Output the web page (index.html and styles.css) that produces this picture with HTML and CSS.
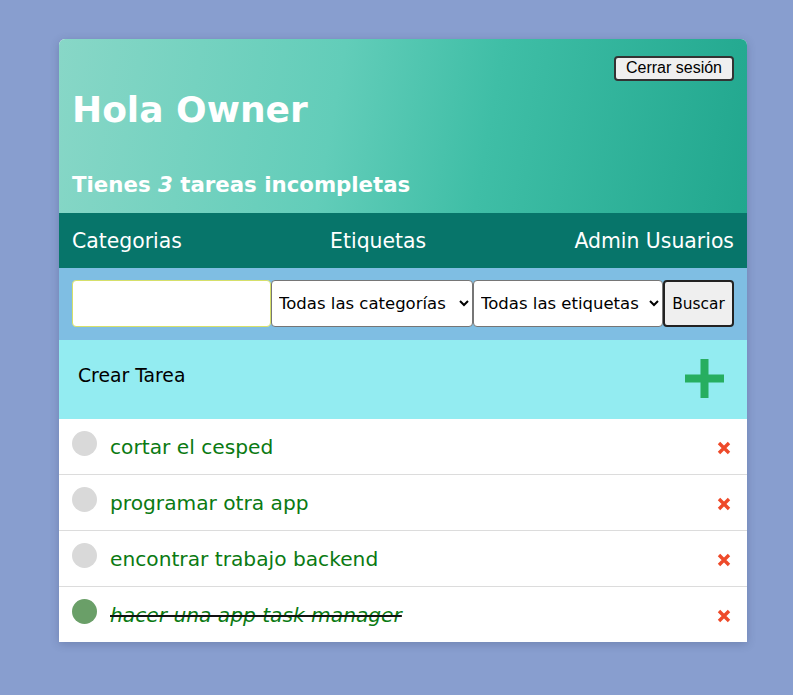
FILE: index.html
```html
<!DOCTYPE html>
<html lang="es">
<head>
<meta charset="utf-8">
<title>Tareas</title>
<link rel="stylesheet" href="styles.css">
</head>
<body>
<div class="card">
  <header class="hero">
    <button class="logout">Cerrar sesión</button>
    <h1 class="hello">Hola Owner</h1>
    <h2 class="count">Tienes <em>3</em> tareas incompletas</h2>
  </header>
  <nav class="nav">
    <a class="nav-link">Categorias</a>
    <a class="nav-link">Etiquetas</a>
    <a class="nav-link">Admin Usuarios</a>
  </nav>
  <form class="search">
    <input class="search-input" type="text">
    <select class="sel sel-cat"><option>Todas las categorías</option></select>
    <select class="sel sel-tag"><option>Todas las etiquetas</option></select>
    <button type="button" class="search-btn">Buscar</button>
  </form>
  <div class="create">
    <span class="create-label">Crear Tarea</span>
    <svg class="plus" width="39" height="39" viewBox="0 0 39 39"><rect x="15.5" y="0" width="8" height="39" fill="#27ae60"/><rect x="0" y="15.5" width="39" height="8" fill="#27ae60"/></svg>
  </div>
  <ul class="tasks">
    <li class="task"><span class="dot"></span><span class="task-text">cortar el cesped</span><svg class="del" width="14" height="14" viewBox="0 0 14 14"><path d="M2 2L12 12M12 2L2 12" stroke="#ee4a2a" stroke-width="3.4"/></svg></li>
    <li class="task"><span class="dot"></span><span class="task-text">programar otra app</span><svg class="del" width="14" height="14" viewBox="0 0 14 14"><path d="M2 2L12 12M12 2L2 12" stroke="#ee4a2a" stroke-width="3.4"/></svg></li>
    <li class="task"><span class="dot"></span><span class="task-text">encontrar trabajo backend</span><svg class="del" width="14" height="14" viewBox="0 0 14 14"><path d="M2 2L12 12M12 2L2 12" stroke="#ee4a2a" stroke-width="3.4"/></svg></li>
    <li class="task done"><span class="dot"></span><span class="task-text">hacer una app task manager</span><svg class="del" width="14" height="14" viewBox="0 0 14 14"><path d="M2 2L12 12M12 2L2 12" stroke="#ee4a2a" stroke-width="3.4"/></svg></li>
  </ul>
</div>
</body>
</html>
```
FILE: styles.css
```css
* { box-sizing: border-box; }
html, body { margin: 0; padding: 0; }
body {
  background: #889ecf;
  font-family: "DejaVu Sans", sans-serif;
  min-height: 695px;
}
.card {
  width: 688px;
  margin: 39px 0 0 59px;
  border-radius: 6px 6px 0 0;
  overflow: hidden;
  background: #fff;
  box-shadow: 0 2px 8px rgba(40, 50, 90, 0.25);
}
.hero {
  height: 174px;
  padding: 17px 13px 0;
  display: flex;
  flex-direction: column;
  background: linear-gradient(100deg, #88d7c7 0%, #62cdb9 40%, #3fbea6 62%, #21a78e 100%);
  color: #fff;
}
.logout {
  align-self: flex-end;
  font-family: "Liberation Sans", Arial, sans-serif;
  font-size: 16px;
  line-height: 18px;
  padding: 1px 10px 2px;
  background: #efefef;
  color: #000;
  border: 2px solid #333;
  border-radius: 4px;
  height: 25px;
}
.hello {
  margin: 7px 0 0;
  font-size: 36px;
  line-height: 44px;
  font-weight: bold;
}
.count {
  margin: 40px 0 0;
  font-size: 21.3px;
  line-height: 26px;
  font-weight: bold;
}
.count em { font-style: italic; }
.nav {
  height: 55px;
  background: #07756a;
  display: flex;
  align-items: center;
  justify-content: space-between;
  padding: 0 13px;
}
.nav-link {
  color: #fff;
  font-size: 20.4px;
  text-decoration: none;
}
.search {
  margin: 0;
  background: #7fbee3;
  padding: 12px 13px 13px;
  display: flex;
}
.search-input {
  width: 199px;
  height: 47px;
  border: 1px solid #d6e06a;
  border-radius: 4px;
  background: #fff;
}
.sel {
  height: 47px;
  border: 1px solid #767676;
  border-radius: 4px;
  background: #fff;
  color: #000;
  font-family: "DejaVu Sans", sans-serif;
  font-size: 16.5px;
  padding: 0 2px 0 3px;
}
.sel-cat { width: 202px; }
.sel-tag { width: 190px; }
.search-btn {
  width: 71px;
  height: 47px;
  background: #efefef;
  border: 2px solid #222;
  border-radius: 4px;
  font-family: "DejaVu Sans", sans-serif;
  font-size: 15.4px;
  color: #000;
  padding: 0;
}
.create {
  height: 79px;
  background: #93ecf1;
  display: flex;
  align-items: center;
  justify-content: space-between;
  padding: 0 23px 0 19px;
}
.create-label {
  font-size: 18.8px;
  color: #000;
  margin-top: -9px;
}
.plus { margin-top: -2px; }
.tasks {
  list-style: none;
  margin: 0;
  padding: 0;
}
.task {
  height: 56px;
  border-bottom: 1px solid #dcdcdc;
  display: flex;
  align-items: center;
  padding: 0 16px 0 13px;
}
.task:last-child { border-bottom: none; height: 55px; }
.dot {
  width: 25px;
  height: 25px;
  border-radius: 50%;
  background: #d9d9d9;
  flex: none;
  margin-top: -6px;
}
.task-text {
  margin-left: 13px;
  flex: 1;
  color: #0a7a12;
  font-size: 20.2px;
}
.del { flex: none; margin-top: 2px; }
.done .dot { background: #6a9f68; }
.done .task-text {
  font-style: italic;
  text-decoration: line-through;
  text-decoration-color: #111;
  text-decoration-thickness: 2px;
}
```
